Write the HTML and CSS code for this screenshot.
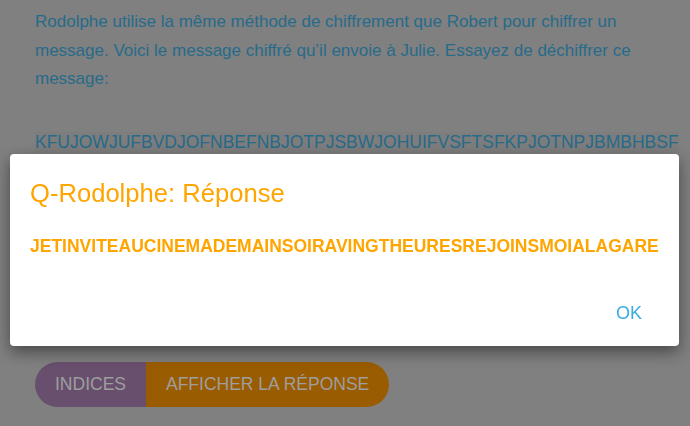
FILE: index.html
```html
<!DOCTYPE html>
<html lang="fr">
<head>
<meta charset="utf-8">
<title>Q-Rodolphe</title>
<link rel="stylesheet" href="styles.css">
</head>
<body>
<main class="page">
  <p class="intro">Rodolphe utilise la même méthode de chiffrement que Robert pour chiffrer un message. Voici le message chiffré qu’il envoie à Julie. Essayez de déchiffrer ce message:</p>
  <div class="cipher"><span class="cipher-text">KFUJOWJUFBVDJOFNBEFNBJOTPJSBWJOHUIFVSFTSFKPJOTNPJBMBHBSF</span></div>
  <div class="actions">
    <button class="btn btn-hints">INDICES</button>
    <button class="btn btn-answer">AFFICHER LA RÉPONSE</button>
  </div>
</main>
<div class="dialog" role="dialog">
  <h2 class="dialog-title">Q-Rodolphe: Réponse</h2>
  <p class="dialog-answer">JETINVITEAUCINEMADEMAINSOIRAVINGTHEURESREJOINSMOIALAGARE</p>
  <div class="dialog-actions">
    <button class="dialog-ok">OK</button>
  </div>
</div>
</body>
</html>
```
FILE: styles.css
```css
html, body {
  margin: 0;
  padding: 0;
}
body {
  background: #808080;
  font-family: "Liberation Sans", Arial, sans-serif;
  width: 690px;
  height: 426px;
  overflow: hidden;
}
.page {
  padding: 8px 35px 0 35px;
}
.intro {
  margin: 0;
  font-size: 17px;
  line-height: 28.5px;
  color: #276b8a;
}
.cipher {
  margin-top: 38px;
}
.cipher-text {
  display: inline-block;
  font-size: 17.5px;
  line-height: 21px;
  color: #276b8a;
  background: #7d7d7d;
}
.actions {
  display: flex;
  margin-top: 209px;
}
.btn {
  border: none;
  height: 45px;
  font-family: inherit;
  font-size: 17.5px;
  color: #9e9e9e;
  padding: 0 20px;
}
.btn-hints {
  background: #684f6e;
  border-radius: 23px 0 0 23px;
}
.btn-answer {
  background: #9a5c00;
  border-radius: 0 23px 23px 0;
}
.dialog {
  position: fixed;
  left: 10px;
  top: 154px;
  width: 669px;
  height: 192px;
  box-sizing: border-box;
  background: #fff;
  border-radius: 4px;
  box-shadow: 0 6px 16px rgba(0, 0, 0, 0.45);
  padding: 24px 20px 0 20px;
  display: flex;
  flex-direction: column;
}
.dialog-title {
  margin: 0;
  font-weight: normal;
  font-size: 25.6px;
  line-height: 30px;
  color: #ffa500;
}
.dialog-answer {
  margin: 28px 0 0 0;
  font-weight: bold;
  font-size: 17.5px;
  line-height: 20px;
  color: #ffa500;
}
.dialog-actions {
  display: flex;
  justify-content: flex-end;
  margin-top: 47px;
}
.dialog-ok {
  border: none;
  background: none;
  font-family: inherit;
  font-size: 18px;
  line-height: 20px;
  color: #3aace0;
  padding: 0 16px;
  margin-right: 1px;
}
```
